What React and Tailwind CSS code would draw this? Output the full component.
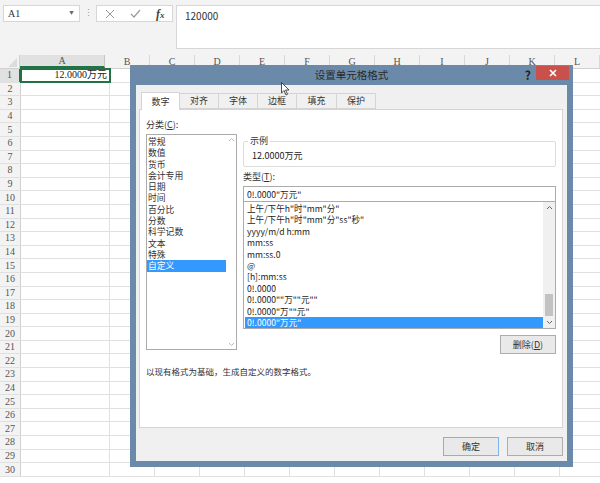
import React from "react";

const cols = ["B", "C", "D", "E", "F", "G", "H", "I", "J", "K", "L"];
const rows = Array.from({ length: 30 }, (_, i) => i + 1);

const categories = ["常规", "数值", "货币", "会计专用", "日期", "时间", "百分比", "分数", "科学记数", "文本", "特殊", "自定义"];
const types = [
  '上午/下午h"时"mm"分"',
  '上午/下午h"时"mm"分"ss"秒"',
  "yyyy/m/d h:mm",
  "mm:ss",
  "mm:ss.0",
  "@",
  "[h]:mm:ss",
  "0!.0000",
  '0!.0000""万""元""',
  '0!.0000"万""元"',
  '0!.0000"万元"',
];
const tabs = ["数字", "对齐", "字体", "边框", "填充", "保护"];

const ui = { fontFamily: '"Noto Sans CJK SC", "Noto Sans", sans-serif' };
const grid = { fontFamily: '"Liberation Serif", "Noto Sans CJK SC", serif' };

const Sheet = () => (
  <div className="w-[600px] h-[483px] overflow-hidden bg-white" style={grid}>
    {/* formula bar */}
    <div className="h-[55px] bg-[#f3f3f3] flex items-start pt-[5px] pl-[3px]">
      <div className="w-[77px] h-[17px] bg-white border border-[#d6d6d6] flex items-center justify-between px-[4px] text-[10px] text-[#333]">
        <span>A1</span>
        <span className="text-[7px] text-[#666]">▼</span>
      </div>
      <div className="w-[16px] h-[17px] flex items-center justify-center text-[9px] text-[#999]">⋮</div>
      <div className="w-[77px] h-[17px] bg-white border border-[#d6d6d6] flex items-center justify-around text-[#aaa]">
        <svg width="10" height="10" viewBox="0 0 10 10"><path d="M1 1L9 9M9 1L1 9" stroke="#9a9a9a" strokeWidth="1" /></svg>
        <svg width="11" height="10" viewBox="0 0 11 10"><path d="M1 5L4 8L10 1" stroke="#9a9a9a" strokeWidth="1.2" fill="none" /></svg>
        <span className="italic font-bold text-[12px] text-[#444] leading-none">f<span className="text-[9px]">x</span></span>
      </div>
      <div className="ml-[3px] flex-1 h-[44px] bg-white border border-[#d6d6d6] border-r-0 px-[8px] pt-[2px] text-[10px] text-[#333]" style={ui}>
        120000
      </div>
    </div>
    {/* column headers */}
    <div className="flex h-[14px] bg-[#f3f3f3] border-b border-[#d0d0d0] text-[10px] text-[#555]">
      <div className="w-[21px] border-r border-[#d0d0d0] relative">
        <div className="absolute right-[2px] bottom-[1px] w-0 h-0 border-l-[9px] border-l-transparent border-b-[9px] border-b-[#dcdcdc]" />
      </div>
      <div className="w-[89px] bg-[#e1e1e1] border-r border-[#c6c6c6] border-b-2 border-b-[#217346] flex items-center justify-center leading-none">A</div>
      {cols.map((c) => (
        <div key={c} className="w-[45px] shrink-0 border-r border-[#d8d8d8] flex items-center justify-center leading-none">{c}</div>
      ))}
    </div>
    {/* rows */}
    {rows.map((r) => (
      <div key={r} className="flex h-[13.6px] border-b border-[#e0e0e0] text-[10px]">
        <div className={`w-[21px] shrink-0 border-r border-[#d0d0d0] flex items-center justify-center leading-none text-[#555] ${r === 1 ? "bg-[#e1e1e1] border-r-2 border-r-[#217346]" : "bg-[#f3f3f3]"}`}>{r}</div>
        <div className={`w-[89px] shrink-0 border-r border-[#e0e0e0] flex items-center justify-end pr-[2px] leading-none text-[#222] ${r === 1 ? "outline-2 outline-[#217346] -outline-offset-1" : ""}`}>
          {r === 1 ? "12.0000万元" : ""}
        </div>
        {cols.map((c) => (
          <div key={c} className="w-[45px] shrink-0 border-r border-[#e0e0e0]" />
        ))}
      </div>
    ))}
  </div>
);

const Btn = ({ children, primary, w = "w-[56px]" }) => (
  <div className={`${w} h-[19px] flex items-center justify-center text-[9px] text-[#333] bg-[#e9e9e9] border ${primary ? "border-[#7eb4ea]" : "border-[#adadad]"}`}>
    {children}
  </div>
);

const Dialog = () => (
  <div className="absolute left-[130px] top-[65px] w-[443px] h-[402px] bg-[#6b8aa9] flex flex-col" style={ui}>
    {/* title bar */}
    <div className="h-[20px] flex items-center relative shrink-0">
      <div className="flex-1 text-center text-[10.5px] text-[#2a2a2a] pl-[48px]">设置单元格格式</div>
      <div className="text-[12px] font-bold text-[#222] mr-[5px] leading-none">?</div>
      <div className="w-[33px] h-[14px] bg-[#c8514c] flex items-center justify-center mr-[4px] self-start mt-[1px]">
        <svg width="8" height="8" viewBox="0 0 8 8"><path d="M1 1L7 7M7 1L1 7" stroke="#fff" strokeWidth="1.6" /></svg>
      </div>
    </div>
    {/* body */}
    <div className="mx-[6px] mb-[6px] flex-1 bg-[#f0f0f0] flex flex-col">
      {/* tabs */}
      <div className="flex pl-[5px] pt-[7px] h-[24px] items-end">
        {tabs.map((t, i) => (
          <div
            key={t}
            className={`${i === 0 ? "w-[39px] h-[18px] bg-white border-b-0 relative z-10 -mb-px" : "w-[40px] h-[16px] bg-[#f0f0f0]"} ${i === 4 ? "w-[41px]" : ""} border border-[#d4d4d4] -ml-px first:ml-0 flex items-center justify-center text-[9px] text-[#333]`}
          >
            {t}
          </div>
        ))}
      </div>
      {/* panel */}
      <div className="ml-[3px] w-[424px] h-[319px] bg-white border border-[#d4d4d4] flex flex-col">
        <div className="flex">
          {/* left column */}
          <div className="ml-[6px] pt-[9px] flex flex-col">
            <div className="h-[12px] text-[9px] leading-[12px] text-[#333] mb-[3px]">分类(<span className="underline">C</span>):</div>
            <div className="w-[91px] h-[216px] border border-[#ababab] flex">
              <div className="flex-1 pt-[1px]">
                {categories.map((c, i) => (
                  <div key={c} className={`h-[11.3px] leading-[11.3px] text-[8.8px] pl-[1px] ${i === 11 ? "bg-[#3399ff] text-white" : "text-[#333]"}`}>{c}</div>
                ))}
              </div>
              <div className="w-[10px] flex flex-col justify-between items-center py-[2px] text-[#bbb]">
                <svg width="7" height="5" viewBox="0 0 7 5"><path d="M1 4L3.5 1.5L6 4" stroke="#bbb" fill="none" /></svg>
                <svg width="7" height="5" viewBox="0 0 7 5"><path d="M1 1L3.5 3.5L6 1" stroke="#bbb" fill="none" /></svg>
              </div>
            </div>
          </div>
          {/* right column */}
          <div className="ml-[6px] w-[313px] flex flex-col pt-[31px]">
            <div className="relative h-[26px] border border-[#dcdcdc] rounded-[2px]">
              <div className="absolute -top-[7px] left-[4px] px-[2px] bg-white text-[9px] leading-[12px] text-[#333]">示例</div>
              <div className="pl-[8px] pt-[8px] text-[9px] leading-[12px] text-[#222]">12.0000万元</div>
            </div>
            <div className="mt-[4px] h-[12px] text-[9px] leading-[12px] text-[#333]">类型(<span className="underline">T</span>):</div>
            <div className="mt-[3px] h-[16px] border border-[#ababab] pl-[3px] text-[8.6px] leading-[14px] text-[#222]">0!.0000"万元"</div>
            <div className="h-[127px] border border-[#ababab] border-t-0 flex">
              <div className="flex-1 pt-[1px] pl-[1px]">
                {types.map((t, i) => (
                  <div key={t} className={`h-[11.4px] leading-[11.4px] text-[8.6px] pl-[2px] whitespace-nowrap ${i === 10 ? "bg-[#3399ff] text-white" : "text-[#222]"}`}>{t}</div>
                ))}
              </div>
              <div className="w-[12px] bg-[#f0f0f0] flex flex-col items-center py-[3px]">
                <svg width="7" height="5" viewBox="0 0 7 5"><path d="M1 4L3.5 1.5L6 4" stroke="#666" fill="none" /></svg>
                <div className="flex-1" />
                <div className="w-[8px] h-[22px] bg-[#c2c2c2] mb-[4px]" />
                <svg width="7" height="5" viewBox="0 0 7 5"><path d="M1 1L3.5 3.5L6 1" stroke="#666" fill="none" /></svg>
              </div>
            </div>
            <div className="mt-[6px] flex justify-end">
              <Btn>删除(<span className="underline">D</span>)</Btn>
            </div>
          </div>
        </div>
        <div className="ml-[6px] mt-[11px] text-[8.5px] leading-[12px] text-[#333]">以现有格式为基础，生成自定义的数字格式。</div>
      </div>
      {/* footer buttons */}
      <div className="flex justify-end gap-[8px] mt-[9px] mr-[4px]">
        <Btn primary>确定</Btn>
        <Btn>取消</Btn>
      </div>
    </div>
    {/* mouse pointer */}
    <svg className="absolute left-[151px] top-[17px]" width="9" height="14" viewBox="0 0 9 14">
      <path d="M0.5 0.5L0.5 11L3 8.5L5 13L6.5 12.3L4.6 8H8Z" fill="#fff" stroke="#222" strokeWidth="0.8" />
    </svg>
  </div>
);

export default function App() {
  return (
    <div className="relative w-[600px] h-[483px] overflow-hidden">
      <Sheet />
      <Dialog />
    </div>
  );
}
